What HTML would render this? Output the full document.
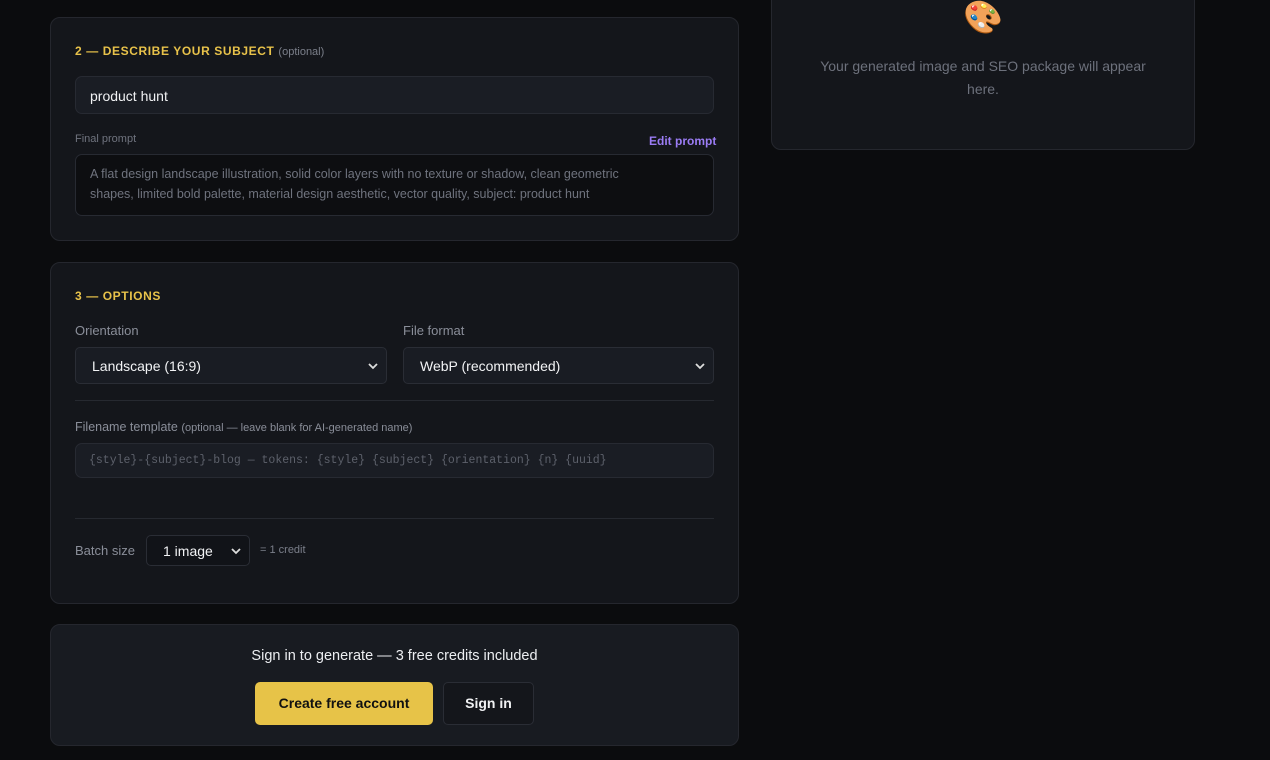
<!DOCTYPE html>
<html><head><style>
*{box-sizing:border-box;margin:0;padding:0}
body{width:1270px;height:760px;background:#0b0c0e;font-family:"Liberation Sans",sans-serif;position:relative;overflow:hidden;color:#e6e7ea}
.a{position:absolute}
.card{position:absolute;background:#14161b;border:1px solid #25272e;border-radius:10px}
.h{font-weight:bold;color:#e8c24a;font-size:12px;letter-spacing:.6px}
.lbl{font-size:12px;color:#8a8e99}
.in{position:absolute;background:#1a1d24;border:1px solid #272a32;border-radius:7px}
.sel{position:absolute;background:#191c23;border:1px solid #2a2d35;border-radius:5px;font-size:14px;color:#f2f3f5;padding-left:16px;display:flex;align-items:center}
.chev{position:absolute;right:8px;top:50%;margin-top:-4px}
</style></head><body>
<div class="card" style="left:771px;top:-12px;width:424px;height:162px;"></div>
<div class="a" style="left:963px;top:-2px;font-size:32px;line-height:38px;">🎨</div>
<div class="a" style="left:771px;top:55px;width:424px;text-align:center;font-size:14px;line-height:23px;color:#6d717c;padding:0 36px">Your generated image and SEO package will appear here.</div>

<div class="card" style="left:50px;top:17px;width:689px;height:224px"></div>
<div class="a h" style="left:75px;top:44px">2 — DESCRIBE YOUR SUBJECT <span style="font-weight:normal;color:#7b7f8a;font-size:11px;letter-spacing:0">(optional)</span></div>
<div class="in" style="left:75px;top:76px;width:639px;height:38px;font-size:14px;color:#f0f1f3;padding:11px 14px">product hunt</div>
<div class="a lbl" style="left:75px;top:133px;font-size:11px;color:#6f737e">Final prompt</div>
<div class="a" style="left:649px;top:134px;font-size:12px;font-weight:bold;color:#9b7cf5">Edit prompt</div>
<div class="in" style="left:75px;top:154px;width:639px;height:62px;background:#0d0e11;font-size:12.5px;line-height:20px;color:#6f737e;padding:9px 60px 9px 14px">A flat design landscape illustration, solid color layers with no texture or shadow, clean geometric shapes, limited bold palette, material design aesthetic, vector quality, subject: product hunt</div>

<div class="card" style="left:50px;top:262px;width:689px;height:342px"></div>
<div class="a h" style="left:75px;top:289px">3 — OPTIONS</div>
<div class="a lbl" style="left:75px;top:323px;font-size:13px">Orientation</div>
<div class="a lbl" style="left:403px;top:323px;font-size:13px">File format</div>
<div class="sel" style="left:75px;top:347px;width:312px;height:37px">Landscape (16:9)<svg class="chev" width="10" height="8" viewBox="0 0 10 8"><path d="M1 2l4 4 4-4" stroke="#ddd" stroke-width="1.8" fill="none"/></svg></div>
<div class="sel" style="left:403px;top:347px;width:311px;height:37px">WebP (recommended)<svg class="chev" width="10" height="8" viewBox="0 0 10 8"><path d="M1 2l4 4 4-4" stroke="#ddd" stroke-width="1.8" fill="none"/></svg></div>
<div class="a" style="left:75px;top:400px;width:639px;height:1px;background:#262930"></div>
<div class="a lbl" style="left:75px;top:420px;font-size:12.5px">Filename template <span style="font-size:11px">(optional — leave blank for AI-generated name)</span></div>
<div class="in" style="left:75px;top:443px;width:639px;height:35px;font-family:'Liberation Mono',monospace;font-size:11.5px;color:#5d616b;padding:10px 13px">{style}-{subject}-blog — tokens: {style} {subject} {orientation} {n} {uuid}</div>
<div class="a" style="left:75px;top:518px;width:639px;height:1px;background:#262930"></div>
<div class="a lbl" style="left:75px;top:543px;font-size:13px">Batch size</div>
<div class="sel" style="left:146px;top:535px;width:104px;height:31px;background:#111318">1 image<svg class="chev" width="10" height="8" viewBox="0 0 10 8"><path d="M1 2l4 4 4-4" stroke="#ddd" stroke-width="1.8" fill="none"/></svg></div>
<div class="a" style="left:260px;top:544px;font-size:11px;color:#7b7f8a">= 1 credit</div>

<div class="card" style="left:50px;top:624px;width:689px;height:122px;background:#181b21"></div>
<div class="a" style="left:50px;top:648px;width:689px;text-align:center;font-size:14.5px;color:#eceef1">Sign in to generate — 3 free credits included</div>
<div class="a" style="left:255px;top:682px;width:178px;height:43px;background:#e7c348;border-radius:5px;color:#111;font-size:14px;font-weight:bold;text-align:center;line-height:43px">Create free account</div>
<div class="a" style="left:443px;top:682px;width:91px;height:43px;background:#14161b;border:1px solid #2a2d35;border-radius:5px;color:#f0f1f3;font-size:14px;font-weight:bold;text-align:center;line-height:41px">Sign in</div>
</body></html>
